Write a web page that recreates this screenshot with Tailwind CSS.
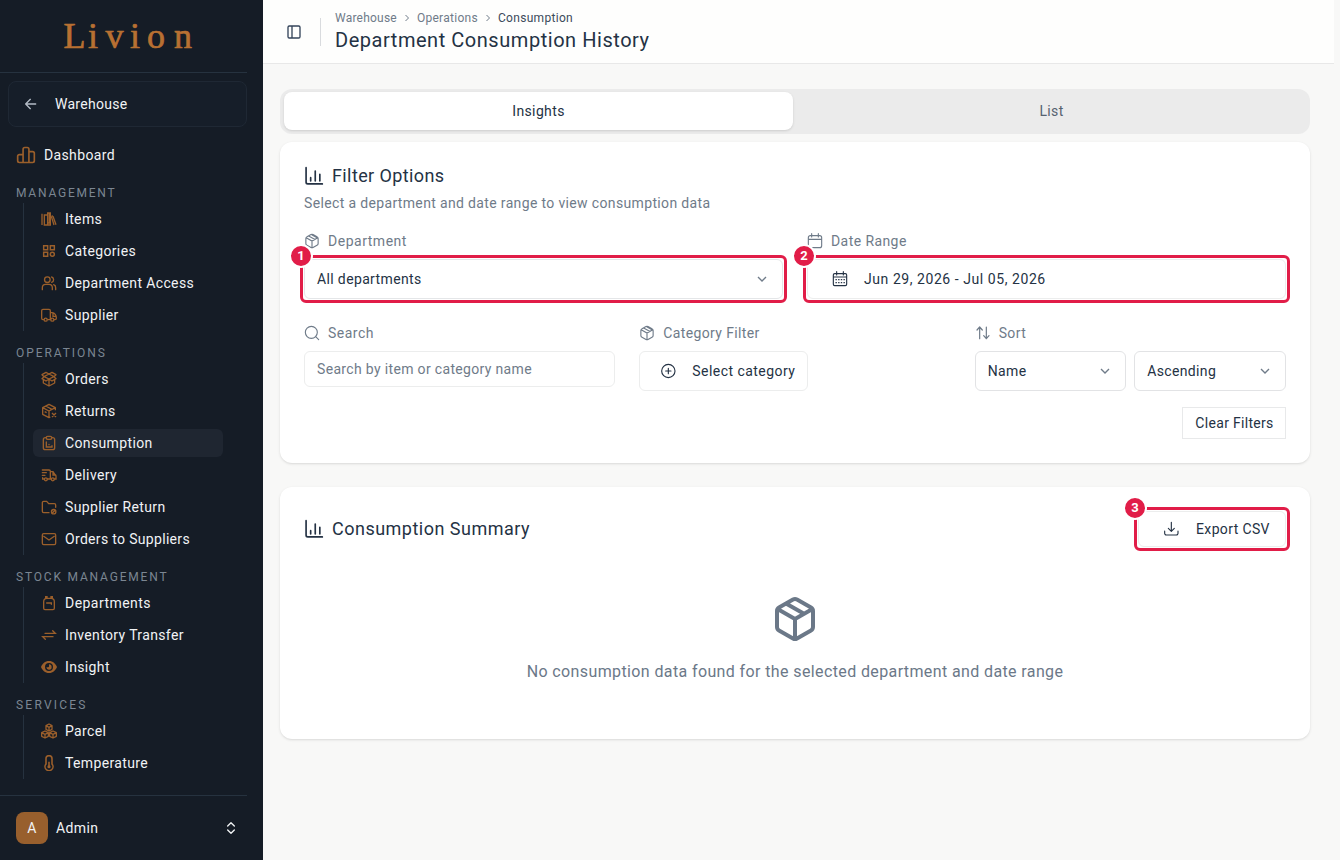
<!DOCTYPE html>
<html lang="en">
  <head>
    <meta charset="UTF-8" />
    <meta name="viewport" content="width=device-width, initial-scale=1.0" />
    <title>Department Consumption History</title>
    <script src="https://cdn.jsdelivr.net/npm/@tailwindcss/browser@4"></script>
  </head>
  <body
    class="flex h-screen overflow-hidden bg-[#f8f8f7] font-[Roboto,sans-serif] text-sm tracking-[0.026em] text-[#243244]"
  >
    <!-- Icon sprite -->
    <svg class="hidden">
      <symbol id="box" viewBox="0 0 24 24">
        <path d="M11 21.730a2 2 0 0 0 2 0l7-4A2 2 0 0 0 21 16V8a2 2 0 0 0-1-1.730l-7-4a2 2 0 0 0-2 0l-7 4A2 2 0 0 0 3 8v8a2 2 0 0 0 1 1.730zM12 22V12M3.290 7 12 12l8.710-5M7.500 4.270l9 5.150" />
      </symbol>
      <symbol id="boxround" viewBox="0 0 24 24">
        <path d="M10.500 21.600a3 3 0 0 0 3 0l6-3.300a3 3 0 0 0 1.700-2.700V8.400a3 3 0 0 0-1.700-2.700l-6-3.300a3 3 0 0 0-3 0l-6 3.300a3 3 0 0 0-1.700 2.700v7.200a3 3 0 0 0 1.700 2.700zM12 22V12M3.300 7 12 12l8.700-5M7 4.500l9.500 5.200M11.500 2.500l8 4.500" />
      </symbol>
      <symbol id="chart" viewBox="0 0 24 24">
        <path d="M2.500 2v17.500a2 2 0 0 0 2 2H22M8 18v-4M13.500 18V6M19 18V10" />
      </symbol>
      <symbol id="down" viewBox="0 0 24 24"><path d="m6 9 6 6 6-6" /></symbol>
      <symbol id="right" viewBox="0 0 24 24"><path d="m9 18 6-6-6-6" /></symbol>
    </svg>

    <!-- Sidebar -->
    <aside class="flex w-[263px] shrink-0 flex-col bg-[#151c26] pr-4 text-[#f1f3f5]">
      <div class="flex h-[73px] shrink-0 items-center border-b border-[#26323f]">
        <svg class="h-[72px] w-[247px] fill-[#b87032] stroke-[#b87032]" stroke-width="0.7">
          <text x="63.500 88 105.500 130 147 174" y="48" font-family="Liberation Serif, serif" font-size="36" letter-spacing="0">Livion</text>
        </svg>
      </div>
      <div class="mt-2 ml-2 flex h-[46px] shrink-0 items-center rounded-lg border border-[#1f2834] bg-[#161e29] pl-3.5">
        <svg class="h-4 w-4 fill-none stroke-[#b4bcc6] stroke-2" viewBox="0 0 24 24" stroke-linecap="round" stroke-linejoin="round"><path d="m11 19-7-7 7-7M19 12H4" /></svg>
        <span class="ml-4 tracking-[0.02em]">Warehouse</span>
      </div>
      <div class="mt-3 flex h-8 shrink-0 items-center pl-4">
        <svg class="h-5 w-5 fill-none stroke-[#9b5f2b] stroke-2" viewBox="0 0 24 24" stroke-linejoin="round">
          <path d="M2 13.500a2 2 0 0 1 2-2h4.500V21H4a2 2 0 0 1-2-2zM8.500 5a2 2 0 0 1 2-2h3a2 2 0 0 1 2 2v16h-7zM15.500 8H20a2 2 0 0 1 2 2v9a2 2 0 0 1-2 2h-4.500z" />
        </svg>
        <span class="ml-2">Dashboard</span>
      </div>

      <nav class="mt-3 flex flex-col gap-3">
        <section>
          <h2 class="pl-4 text-xs leading-5 tracking-[0.148em] text-[#7b8692]">MANAGEMENT</h2>
          <ul class="ml-[23px] flex flex-col gap-1 border-l border-[#26323f] py-0.5 pr-6 pl-[9px]">
            <li class="flex h-7 items-center gap-2 rounded-md pl-2">
              <svg class="h-4 w-4 fill-none stroke-[#9b5f2b] stroke-2" viewBox="0 0 24 24"><path d="M1.500 4v17M5 6v12M5 21h5V6H5zM9 3h5v18h-4M10 3v18M12.500 3v15M10 18h4M15.500 8l4 13M18 8l4.500 12.500M15.500 8l2.500-.7" /></svg>
              Items
            </li>
            <li class="flex h-7 items-center gap-2 rounded-md pl-2">
              <svg class="h-4 w-4 fill-none stroke-[#9b5f2b] stroke-[2.2]" viewBox="0 0 24 24"><path d="M4 4h6v6H4zM14 4h6v6h-6zM4 14h6v6H4z" /><circle cx="17" cy="17" r="3" /></svg>
              Categories
            </li>
            <li class="flex h-7 items-center gap-2 rounded-md pl-2">
              <svg class="h-4 w-4 fill-none stroke-[#9b5f2b] stroke-2" viewBox="0 0 24 24" stroke-linecap="round"><circle cx="9.500" cy="7" r="4.200" /><path d="M2 22v-3a5 5 0 0 1 5-5h5a5 5 0 0 1 5 5v3M16 3a4.200 4.200 0 0 1 0 8M19 14.500a4.500 4.500 0 0 1 3 4.500v3" /></svg>
              Department Access
            </li>
            <li class="flex h-7 items-center gap-2 rounded-md pl-2">
              <svg class="h-4 w-4 fill-none stroke-[#9b5f2b] stroke-2" viewBox="0 0 24 24"><path d="M4.500 19H3a2 2 0 0 1-2-2V5.500a2 2 0 0 1 2-2h9a2 2 0 0 1 2 2V19H9.500M14 8.500h3c3.500 0 6 4 6 7.500v1a2 2 0 0 1-2 2h-1.500M14 19h.5M18 9v5h4.500" /><circle cx="7" cy="19" r="2.300" /><circle cx="17" cy="19" r="2.300" /></svg>
              Supplier
            </li>
          </ul>
        </section>
        <section>
          <h2 class="pl-4 text-xs leading-5 tracking-[0.160em] text-[#7b8692]">OPERATIONS</h2>
          <ul class="ml-[23px] flex flex-col gap-1 border-l border-[#26323f] py-0.5 pr-6 pl-[9px]">
            <li class="flex h-7 items-center gap-2 rounded-md pl-2">
              <svg class="h-4 w-4 fill-none stroke-[#9b5f2b] stroke-2" viewBox="0 0 24 24" stroke-linejoin="round"><path d="M12 4.500 7.500 2 1.500 5.500l3 3-3 3 6 3.500 4.500-3 4.500 3 6-3.500-3-3 3-3-6-3.500zM4.500 8.500 12 4.500l7.500 4-7.500 3.500zM3.500 13v5l8.500 4.500 8.500-4.500v-5M12 12v10" /></svg>
              Orders
            </li>
            <li class="flex h-7 items-center gap-2 rounded-md pl-2">
              <svg class="h-4 w-4 fill-none stroke-[#9b5f2b] stroke-2" viewBox="0 0 24 24" stroke-linejoin="round"><path d="M21.500 11V7L12 2 2.500 7v10l9.500 5 2-1M12 22V12M2.500 7l9.500 5 9.500-5M7 4.500l9.500 5v1M5.500 13l3 1.500M16.500 15l6 6M22.500 15l-6 6" /></svg>
              Returns
            </li>
            <li class="flex h-7 items-center gap-2 rounded-md bg-[#1f2631] pl-2">
              <svg class="h-4 w-4 fill-none stroke-[#9b5f2b] stroke-2" viewBox="0 0 24 24" stroke-linecap="round"><path d="M8 4H6.500a3 3 0 0 0-3 3v12a3 3 0 0 0 3 3h11a3 3 0 0 0 3-3V7a3 3 0 0 0-3-3H16M10 2h4a2 2 0 0 1 0 4.500h-4A2 2 0 0 1 10 2zM8 10.500v7.500h8.500v-2M12 14.500v-.5" /></svg>
              Consumption
            </li>
            <li class="flex h-7 items-center gap-2 rounded-md pl-2">
              <svg class="h-4 w-4 fill-none stroke-[#9b5f2b] stroke-2" viewBox="0 0 24 24" stroke-linecap="round"><path d="M2 4.500h10a2 2 0 0 1 2 2V18H9.500M14 7h4l3 4.500 1.500 1.500v5H20M14 18h1.500M2 8.500h6M2 12.500h4M2.500 16v2H5M18 7v5h4" /><circle cx="7.300" cy="18.500" r="2.200" /><circle cx="17.700" cy="18.500" r="2.200" /></svg>
              Delivery
            </li>
            <li class="flex h-7 items-center gap-2 rounded-md pl-2">
              <svg class="h-4 w-4 fill-none stroke-[#9b5f2b] stroke-2" viewBox="0 0 24 24" stroke-linecap="round"><path d="M12 20.500H4a2 2 0 0 1-2-2v-13a2 2 0 0 1 2-2h4.500l3 3.500H20a2 2 0 0 1 2 2v3.500" /><circle cx="19" cy="19" r="3.300" /><path d="m17 21 4-4" /></svg>
              Supplier Return
            </li>
            <li class="flex h-7 items-center gap-2 rounded-md pl-2">
              <svg class="h-4 w-4 fill-none stroke-[#9b5f2b] stroke-2" viewBox="0 0 24 24" stroke-linejoin="round"><rect x="2" y="4" width="20" height="16.500" rx="2" /><path d="m3.500 7.500 8.500 6 8.500-6" /></svg>
              <span class="tracking-[0.023em]">Orders to Suppliers</span>
            </li>
          </ul>
        </section>
        <section>
          <h2 class="pl-4 text-xs leading-5 tracking-[0.151em] text-[#7b8692]">STOCK MANAGEMENT</h2>
          <ul class="ml-[23px] flex flex-col gap-1 border-l border-[#26323f] py-0.5 pr-6 pl-[9px]">
            <li class="flex h-7 items-center gap-2 rounded-md pl-2">
              <svg class="h-4 w-4 fill-none stroke-[#9b5f2b] stroke-2" viewBox="0 0 24 24" stroke-linecap="round"><path d="M4 10a5 5 0 0 1 5-5h6a5 5 0 0 1 5 5v10a2 2 0 0 1-2 2H6a2 2 0 0 1-2-2zM7 5V2.500h2V5M15 5V2.500h2V5M8.500 12h7v2" /></svg>
              <span class="tracking-[0.032em]">Departments</span>
            </li>
            <li class="flex h-7 items-center gap-2 rounded-md pl-2">
              <svg class="h-4 w-4 fill-none stroke-[#9b5f2b] stroke-2" viewBox="0 0 24 24" stroke-linecap="round"><path d="M6 9.500h15.500l-4-4M18 14.500H2.500l4 4" /></svg>
              Inventory Transfer
            </li>
            <li class="flex h-7 items-center gap-2 rounded-md pl-2">
              <svg class="h-4 w-4 fill-[#9b5f2b]" viewBox="0 0 24 24"><path fill-rule="evenodd" d="M12 3C6 3 2 7 0 12c2 5 6 9 12 9s10-4 12-9c-2-5-6-9-12-9zm0 3a6 6 0 1 1 0 12 6 6 0 0 1 0-12z" /><path d="M12 8v3a1.500 1.500 0 0 1-1.500 1.500H8A4 4 0 1 0 12 8z" /></svg>
              Insight
            </li>
          </ul>
        </section>
        <section>
          <h2 class="pl-4 text-xs leading-5 tracking-[0.185em] text-[#7b8692]">SERVICES</h2>
          <ul class="ml-[23px] flex flex-col gap-1 border-l border-[#26323f] py-0.5 pr-6 pl-[9px]">
            <li class="flex h-7 items-center gap-2 rounded-md pl-2">
              <svg class="h-4 w-4 fill-none stroke-[#9b5f2b] stroke-2" viewBox="0 0 24 24" stroke-linejoin="round"><path d="m12 1.500 4.500 2.500v5.500L12 12 7.500 9.500V4zM7.500 4l4.500 2.500L16.500 4M12 6.500V12M6 12l5 2.500v5.500L6 22.500 1 20v-5.500zM1 14.500 6 17l5-2.500M6 17v5.500M18 12l5 2.500v5.500l-5 2.500L13 20v-5.500zM13 14.500l5 2.500 5-2.500M18 17v5.500" /></svg>
              Parcel
            </li>
            <li class="flex h-7 items-center gap-2 rounded-md pl-2">
              <svg class="h-4 w-4 fill-none stroke-[#9b5f2b] stroke-[2.4]" viewBox="0 0 24 24"><path d="M7.500 5.500a4.500 4.500 0 0 1 9 0v8a6 6 0 1 1-9 0zM12 10v6" /><circle cx="12" cy="17.500" r="1.200" /></svg>
              Temperature
            </li>
          </ul>
        </section>
      </nav>

      <div class="mt-auto flex h-[65px] shrink-0 items-center border-t border-[#26323f] pr-2 pl-4">
        <div class="flex h-8 w-8 items-center justify-center rounded-lg bg-[#985f2d]">A</div>
        <span class="ml-2">Admin</span>
        <svg class="ml-auto h-4 w-4 fill-none stroke-current stroke-2" viewBox="0 0 24 24" stroke-linecap="round" stroke-linejoin="round"><path d="m7 15 5 5 5-5M7 9l5-5 5 5" /></svg>
      </div>
    </aside>

    <!-- Page -->
    <div class="mr-1.5 flex min-w-0 flex-1 flex-col">
      <header class="flex h-16 shrink-0 items-center border-b border-[#e8e8e8] bg-[#fefefd] pl-[23px]">
        <svg class="h-4 w-4 fill-none stroke-[#34445a] stroke-2" viewBox="0 0 24 24"><rect x="3" y="3" width="18" height="18" rx="2" /><path d="M9 3v18" /></svg>
        <div class="ml-[18px] h-7 w-px bg-[#d9dbde]"></div>
        <div class="ml-3.5">
          <div class="flex items-center text-xs leading-4 text-[#6f7b89]">
            <span class="tracking-[0.018em]">Warehouse</span>
            <svg class="mx-1 h-3 w-3 fill-none stroke-current stroke-2"><use href="#right" /></svg>
            <span class="tracking-[0.024em]">Operations</span>
            <svg class="mx-1 h-3 w-3 fill-none stroke-current stroke-2"><use href="#right" /></svg>
            <span class="tracking-[0.025em] text-[#3c4a5b]">Consumption</span>
          </div>
          <h1 class="text-xl leading-7 tracking-[0.027em]">Department Consumption History</h1>
        </div>
      </header>

      <main class="flex flex-col pt-[25px] pr-6 pl-[17px]">
        <div class="grid h-[45px] grid-cols-2 rounded-xl bg-[#ebebeb] px-1 pt-[3px] pb-1">
          <div class="mr-0.5 flex items-center justify-center rounded-lg bg-white shadow-sm">Insights</div>
          <div class="flex items-center justify-center pl-0.5 text-[#566270]">List</div>
        </div>

        <section class="mt-2 h-[321px] rounded-xl bg-white px-6 pt-6 shadow-sm">
          <div class="flex h-5 items-center gap-2 text-lg">
            <svg class="h-5 w-5 fill-none stroke-current stroke-2" stroke-linecap="round"><use href="#chart" /></svg>
            <span class="tracking-[0.022em]">Filter Options</span>
          </div>
          <p class="mt-[7px] tracking-[0.025em] text-[#6f7b89]">Select a department and date range to view consumption data</p>

          <div class="mt-[18px] grid grid-cols-2 gap-6">
            <div>
              <div class="flex items-center gap-2 text-[#6f7b89]">
                <svg class="h-4 w-4 fill-none stroke-current" stroke-width="1.700"><use href="#boxround" /></svg>
                <span class="tracking-[0.037em]">Department</span>
              </div>
              <div class="relative mt-2 flex h-10 items-center justify-between rounded-md border border-[#e4e6e8] px-3">
                All departments
                <svg class="h-4 w-4 fill-none stroke-[#6f7b89] stroke-2"><use href="#down" /></svg>
                <div class="absolute -inset-[5px] rounded-md border-3 border-[#e11d48]"></div>
                <div class="absolute -top-4 -left-[16px] flex h-6 w-6 items-center justify-center rounded-full border-2 border-white bg-[#e11d48] text-[13px] font-bold tracking-normal text-white">1</div>
              </div>
            </div>
            <div>
              <div class="flex items-center gap-2 text-[#6f7b89]">
                <svg class="h-4 w-4 fill-none stroke-current" stroke-width="1.700" viewBox="0 0 24 24" stroke-linecap="round"><path d="M7 1v5M17 1v5M2 9.500h20M5 4h14a3 3 0 0 1 3 3v12a3 3 0 0 1-3 3H5a3 3 0 0 1-3-3V7a3 3 0 0 1 3-3z" /></svg>
                <span class="tracking-[0.03em]">Date Range</span>
              </div>
              <div class="relative mt-2 flex h-10 items-center rounded-md border border-[#eceded] pl-6">
                <svg class="h-4 w-4 fill-none stroke-current" stroke-width="1.700" viewBox="0 0 24 24" stroke-linecap="round"><path d="M7 1v5M17 1v5M2 9h20M4 4h16a2 2 0 0 1 2 2v14a2 2 0 0 1-2 2H4a2 2 0 0 1-2-2V6a2 2 0 0 1 2-2z" /><path d="M6 13h.5M10 13h.5M14 13h.5M18 13h.5M6 17.500h.5M10 17.500h.5M14 17.500h.5M18 17.500h.5" stroke-width="2" /></svg>
                <span class="ml-4 tracking-[0.04em]">Jun 29, 2026 - Jul 05, 2026</span>
                <div class="absolute -inset-[5px] rounded-md border-3 border-[#e11d48]"></div>
                <div class="absolute -top-4 -left-[16px] flex h-6 w-6 items-center justify-center rounded-full border-2 border-white bg-[#e11d48] text-[13px] font-bold tracking-normal text-white">2</div>
              </div>
            </div>
          </div>

          <div class="mt-6 grid grid-cols-3 gap-6">
            <div>
              <div class="flex items-center gap-2 text-[#6f7b89]">
                <svg class="h-4 w-4 fill-none stroke-current" stroke-width="1.700" viewBox="0 0 24 24" stroke-linecap="round"><circle cx="11" cy="11" r="9" /><path d="m17.500 17.500 4.500 4.500" /></svg>
                <span class="tracking-[0.035em]">Search</span>
              </div>
              <div class="mt-2 flex h-9 items-center rounded-md border border-[#eceded] px-3 tracking-[0.024em] text-[#6f7b89]">Search by item or category name</div>
            </div>
            <div>
              <div class="flex items-center gap-2 text-[#6f7b89]">
                <svg class="h-4 w-4 fill-none stroke-current" stroke-width="1.700"><use href="#boxround" /></svg>
                Category Filter
              </div>
              <div class="mt-2 flex h-10 w-[169px] items-center rounded-md border border-[#eceded] pl-5">
                <svg class="h-4 w-4 fill-none stroke-current" stroke-width="1.700" viewBox="0 0 24 24" stroke-linecap="round"><circle cx="12.500" cy="12" r="10" /><path d="M12.500 8v8M8.500 12h8" /></svg>
                <span class="ml-4 tracking-[0.032em]">Select category</span>
              </div>
            </div>
            <div>
              <div class="flex items-center gap-2 text-[#6f7b89]">
                <svg class="h-4 w-4 fill-none stroke-current" stroke-width="1.800" viewBox="0 0 24 24" stroke-linecap="round" stroke-linejoin="round"><path d="M7 20.500V3M3 7.500 7 3l4 4.500M17 3v17.500M13 16l4 4.500 4-4.500" /></svg>
                Sort
              </div>
              <div class="mt-2 grid grid-cols-2 gap-2">
                <div class="flex h-10 items-center justify-between rounded-md border border-[#e2e3e5] px-3">
                  Name
                  <svg class="h-4 w-4 fill-none stroke-[#6f7b89] stroke-2"><use href="#down" /></svg>
                </div>
                <div class="flex h-10 items-center justify-between rounded-md border border-[#e2e3e5] px-3">
                  <span class="tracking-[0.024em]">Ascending</span>
                  <svg class="h-4 w-4 fill-none stroke-[#6f7b89] stroke-2"><use href="#down" /></svg>
                </div>
              </div>
            </div>
          </div>
          <div class="mt-4 flex justify-end">
            <div class="flex h-8 w-[104px] items-center justify-center border border-[#e8e9ea] pl-px tracking-[0.022em]">Clear Filters</div>
          </div>
        </section>

        <section class="mt-6 h-[252px] rounded-xl bg-white px-6 pt-6 shadow-sm">
          <div class="flex h-9 items-center justify-between">
            <div class="flex items-center gap-2 text-lg">
              <svg class="h-5 w-5 fill-none stroke-current stroke-2" stroke-linecap="round"><use href="#chart" /></svg>
              <span class="tracking-[0.027em]">Consumption Summary</span>
            </div>
            <div class="relative flex h-9 w-[148px] items-center rounded-md border border-[#eceded] pl-6">
              <svg class="h-4 w-4 fill-none stroke-current" stroke-width="1.700" viewBox="0 0 24 24" stroke-linecap="round" stroke-linejoin="round"><path d="M12.500 2v13M8 11l4.500 4.500L17 11M2.500 15v3.500A2.500 2.500 0 0 0 5 21h15a2.500 2.500 0 0 0 2.500-2.500V15" /></svg>
              <span class="ml-[17px]">Export CSV</span>
              <div class="absolute -inset-[5px] rounded-md border-3 border-[#e11d48]"></div>
              <div class="absolute -top-4 -left-[16px] flex h-6 w-6 items-center justify-center rounded-full border-2 border-white bg-[#e11d48] text-[13px] font-bold tracking-normal text-white">3</div>
            </div>
          </div>
          <div class="mt-12 flex flex-col items-center text-base text-[#6b7888]">
            <svg class="h-12 w-12 fill-none stroke-current stroke-2" stroke-linecap="round" stroke-linejoin="round"><use href="#box" /></svg>
            <p class="mt-[17px] tracking-[0.024em]">No consumption data found for the selected department and date range</p>
          </div>
        </section>
      </main>
    </div>
  </body>
</html>
